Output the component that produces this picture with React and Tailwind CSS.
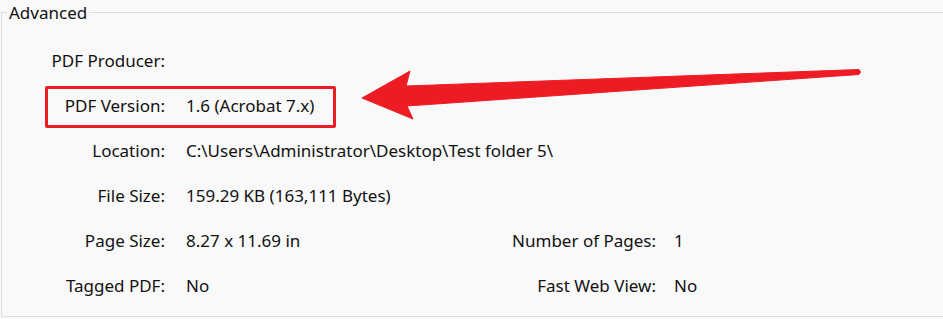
import React from "react";

const rows = [
  { label: "PDF Producer:", value: "" },
  { label: "PDF Version:", value: "1.6 (Acrobat 7.x)" },
  { label: "Location:", value: "C:\\Users\\Administrator\\Desktop\\Test folder 5\\" },
  { label: "File Size:", value: "159.29 KB (163,111 Bytes)" },
  { label: "Page Size:", value: "8.27 x 11.69 in", label2: "Number of Pages:", value2: "1" },
  { label: "Tagged PDF:", value: "No", label2: "Fast Web View:", value2: "No" },
];

const Arrow = () => (
  <svg
    className="absolute left-0 top-0 pointer-events-none"
    width="943"
    height="319"
    viewBox="0 0 943 319"
  >
    <path
      d="M362 98 L410 71 L406 86 L859 69.5 Q862 72 859 74.5 L407 106 L413 119 Z"
      fill="#ed1c24"
      stroke="#ed1c24"
      strokeWidth="1"
      strokeLinejoin="round"
    />
  </svg>
);

export default function App() {
  return (
    <div className="relative w-[943px] h-[319px] overflow-hidden bg-[#f9f9f9] text-[#111] font-['Noto_Sans',sans-serif] text-[17px]">
      <fieldset className="ml-[1px] w-[960px] h-[317px] border border-[#dcdcdc]">
        <legend className="ml-[5px] px-[2px] leading-[25px]">Advanced</legend>
        <div className="pt-[13px]">
          {rows.map((r) => (
            <div key={r.label} className="flex items-center h-[45px]">
              <div className="w-[163px] text-right">{r.label}</div>
              <div className="w-[321px] pl-[21px] whitespace-nowrap">{r.value}</div>
              {r.label2 && (
                <>
                  <div className="w-[170px] text-right">{r.label2}</div>
                  <div className="pl-[18px]">{r.value2}</div>
                </>
              )}
            </div>
          ))}
        </div>
      </fieldset>
      <div className="absolute left-[45px] top-[86px] w-[291px] h-[42px] border-[3px] border-[#ed1c24] rounded-[2px]" />
      <Arrow />
    </div>
  );
}
